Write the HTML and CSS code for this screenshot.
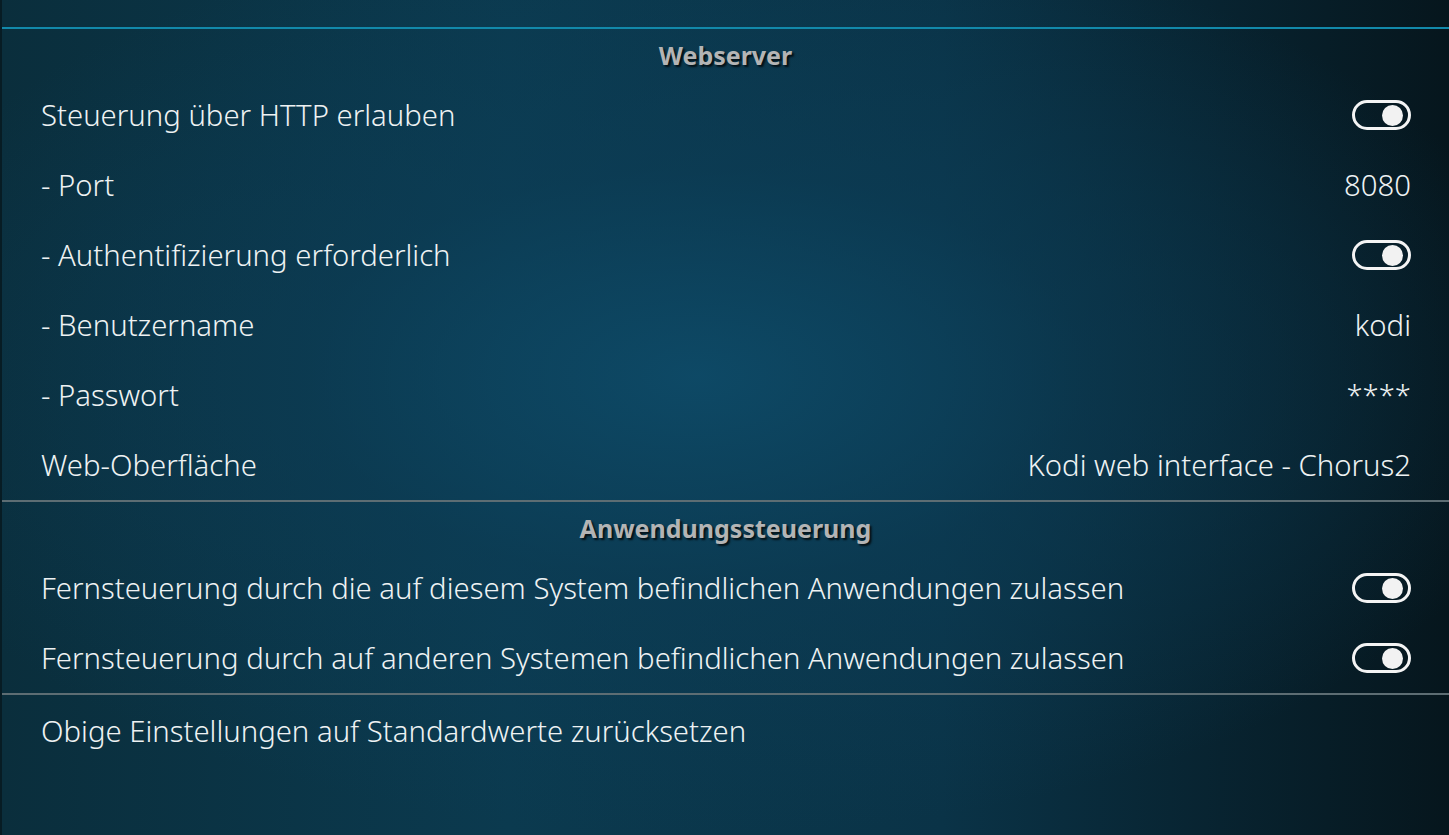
FILE: index.html
```html
<!DOCTYPE html>
<html lang="de">
<head>
<meta charset="utf-8">
<title>Webserver</title>
<link rel="stylesheet" href="styles.css">
</head>
<body>
<div class="screen">
  <div class="panel">
    <div class="group">
      <div class="group-title">Webserver</div>
      <div class="row"><span class="label">Steuerung über HTTP erlauben</span><span class="toggle"><span class="knob"></span></span></div>
      <div class="row"><span class="label">- Port</span><span class="value">8080</span></div>
      <div class="row"><span class="label">- Authentifizierung erforderlich</span><span class="toggle"><span class="knob"></span></span></div>
      <div class="row"><span class="label">- Benutzername</span><span class="value">kodi</span></div>
      <div class="row"><span class="label">- Passwort</span><span class="value">****</span></div>
      <div class="row"><span class="label">Web-Oberfläche</span><span class="value">Kodi web interface - Chorus2</span></div>
    </div>
    <div class="group">
      <div class="group-title">Anwendungssteuerung</div>
      <div class="row"><span class="label">Fernsteuerung durch die auf diesem System befindlichen Anwendungen zulassen</span><span class="toggle"><span class="knob"></span></span></div>
      <div class="row"><span class="label">Fernsteuerung durch auf anderen Systemen befindlichen Anwendungen zulassen</span><span class="toggle"><span class="knob"></span></span></div>
    </div>
    <div class="group last">
      <div class="row"><span class="label">Obige Einstellungen auf Standardwerte zurücksetzen</span></div>
    </div>
  </div>
</div>
</body>
</html>
```
FILE: styles.css
```css
html, body {
  margin: 0;
  padding: 0;
  height: 100%;
}
body {
  font-family: "Noto Sans", "Open Sans", sans-serif;
  color: #eef2f3;
  overflow: hidden;
}
.screen {
  width: 1449px;
  height: 835px;
  background:
    radial-gradient(ellipse 60% 55% at 48% 45%, rgba(14, 76, 106, 0.85) 0%, rgba(12, 62, 88, 0.55) 45%, rgba(8, 40, 56, 0) 100%),
    linear-gradient(90deg, #0a2e3c 0%, #0b3a4f 35%, #0a3347 65%, #06161d 100%);
  padding-top: 27px;
  border-left: 2px solid #071c24;
  box-sizing: border-box;
}
.panel {
  border-top: 2px solid #1289aa;
}
.group {
  border-bottom: 2px solid #5d6d73;
}
.group.last {
  border-bottom: 0;
}
.group-title {
  height: 51px;
  display: flex;
  align-items: center;
  justify-content: center;
  font-weight: 700;
  font-size: 25px;
  color: #b3b4b5;
  text-shadow: 2px 2px 2px rgba(0, 0, 0, 0.75);
}
.row {
  height: 70px;
  display: flex;
  align-items: center;
  justify-content: space-between;
  padding: 0 38px 0 39px;
  font-size: 29.3px;
  font-weight: 300;
}
.label, .value {
  white-space: nowrap;
}
.toggle {
  width: 43px;
  height: 24px;
  border: 3px solid #f4f4f4;
  border-radius: 15px;
  display: flex;
  align-items: center;
  justify-content: flex-end;
  padding: 0 5px;
  box-sizing: content-box;
}
.knob {
  width: 21px;
  height: 21px;
  border-radius: 50%;
  background: #f2f2f2;
}
.group.last .row {
  height: 72px;
}
```
